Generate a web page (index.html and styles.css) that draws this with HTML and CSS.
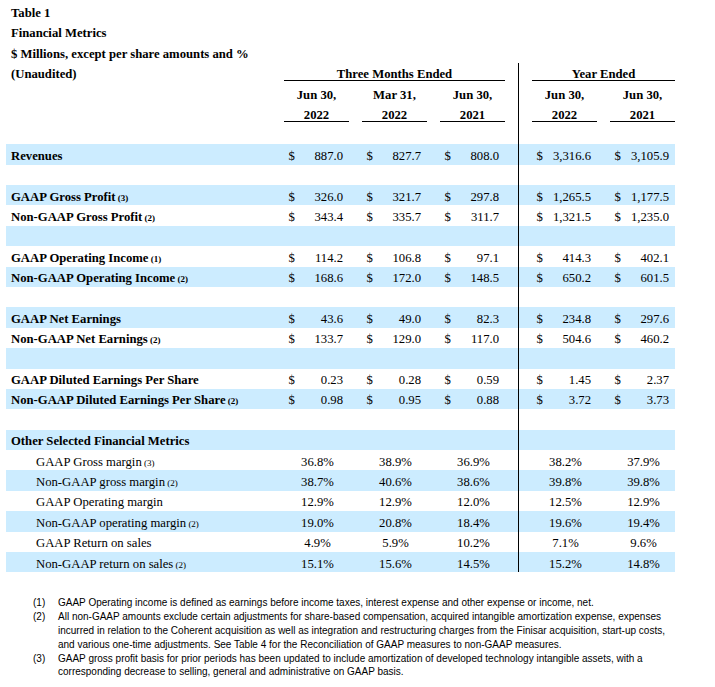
FILE: index.html
```html
<!DOCTYPE html>
<html>
<head>
<meta charset="utf-8">
<title>Table 1 Financial Metrics</title>
<link rel="stylesheet" href="styles.css">
</head>
<body>
<table class="fin">
<colgroup>
<col class="c-lbl"><col class="c-num"><col class="c-gap"><col class="c-num"><col class="c-gap"><col class="c-num"><col class="c-gap"><col class="c-div"><col class="c-num"><col class="c-gap"><col class="c-num">
</colgroup>
<tbody>
<tr><td class="lbl b" colspan="11">Table 1</td></tr>
<tr><td class="lbl b" colspan="11">Financial Metrics</td></tr>
<tr><td class="lbl b" colspan="11">$ Millions, except per share amounts and %</td></tr>
<tr><td class="lbl b">(Unaudited)</td><td class="ctr b ul" colspan="5">Three Months Ended</td><td></td><td class="vl"></td><td class="ctr b ul" colspan="3">Year Ended</td></tr>
<tr><td></td><td class="ctr b">Jun 30,</td><td></td><td class="ctr b">Mar 31,</td><td></td><td class="ctr b">Jun 30,</td><td></td><td class="vl"></td><td class="ctr b">Jun 30,</td><td></td><td class="ctr b">Jun 30,</td></tr>
<tr><td></td><td class="ctr b ul">2022</td><td></td><td class="ctr b ul">2022</td><td></td><td class="ctr b ul">2021</td><td></td><td class="vl"></td><td class="ctr b ul">2022</td><td></td><td class="ctr b ul">2021</td></tr>
<tr><td colspan="7"></td><td class="vl"></td><td colspan="3"></td></tr>

<tr class="blue"><td class="lbl b">Revenues</td><td><div class="m"><span>$</span><span>887.0</span></div></td><td></td><td><div class="m"><span>$</span><span>827.7</span></div></td><td></td><td><div class="m"><span>$</span><span>808.0</span></div></td><td></td><td class="vl"></td><td><div class="m"><span>$</span><span>3,316.6</span></div></td><td></td><td><div class="m"><span>$</span><span>3,105.9</span></div></td></tr>
<tr><td colspan="7"></td><td class="vl"></td><td colspan="3"></td></tr>
<tr class="blue"><td class="lbl b">GAAP Gross Profit<small> (3)</small></td><td><div class="m"><span>$</span><span>326.0</span></div></td><td></td><td><div class="m"><span>$</span><span>321.7</span></div></td><td></td><td><div class="m"><span>$</span><span>297.8</span></div></td><td></td><td class="vl"></td><td><div class="m"><span>$</span><span>1,265.5</span></div></td><td></td><td><div class="m"><span>$</span><span>1,177.5</span></div></td></tr>
<tr><td class="lbl b">Non-GAAP Gross Profit<small> (2)</small></td><td><div class="m"><span>$</span><span>343.4</span></div></td><td></td><td><div class="m"><span>$</span><span>335.7</span></div></td><td></td><td><div class="m"><span>$</span><span>311.7</span></div></td><td></td><td class="vl"></td><td><div class="m"><span>$</span><span>1,321.5</span></div></td><td></td><td><div class="m"><span>$</span><span>1,235.0</span></div></td></tr>
<tr class="blue"><td colspan="7"></td><td class="vl"></td><td colspan="3"></td></tr>
<tr><td class="lbl b">GAAP Operating Income<small> (1)</small></td><td><div class="m"><span>$</span><span>114.2</span></div></td><td></td><td><div class="m"><span>$</span><span>106.8</span></div></td><td></td><td><div class="m"><span>$</span><span>97.1</span></div></td><td></td><td class="vl"></td><td><div class="m"><span>$</span><span>414.3</span></div></td><td></td><td><div class="m"><span>$</span><span>402.1</span></div></td></tr>
<tr class="blue"><td class="lbl b">Non-GAAP Operating Income<small> (2)</small></td><td><div class="m"><span>$</span><span>168.6</span></div></td><td></td><td><div class="m"><span>$</span><span>172.0</span></div></td><td></td><td><div class="m"><span>$</span><span>148.5</span></div></td><td></td><td class="vl"></td><td><div class="m"><span>$</span><span>650.2</span></div></td><td></td><td><div class="m"><span>$</span><span>601.5</span></div></td></tr>
<tr><td colspan="7"></td><td class="vl"></td><td colspan="3"></td></tr>
<tr class="blue"><td class="lbl b">GAAP Net Earnings</td><td><div class="m"><span>$</span><span>43.6</span></div></td><td></td><td><div class="m"><span>$</span><span>49.0</span></div></td><td></td><td><div class="m"><span>$</span><span>82.3</span></div></td><td></td><td class="vl"></td><td><div class="m"><span>$</span><span>234.8</span></div></td><td></td><td><div class="m"><span>$</span><span>297.6</span></div></td></tr>
<tr><td class="lbl b">Non-GAAP Net Earnings<small> (2)</small></td><td><div class="m"><span>$</span><span>133.7</span></div></td><td></td><td><div class="m"><span>$</span><span>129.0</span></div></td><td></td><td><div class="m"><span>$</span><span>117.0</span></div></td><td></td><td class="vl"></td><td><div class="m"><span>$</span><span>504.6</span></div></td><td></td><td><div class="m"><span>$</span><span>460.2</span></div></td></tr>
<tr class="blue"><td colspan="7"></td><td class="vl"></td><td colspan="3"></td></tr>
<tr><td class="lbl b">GAAP Diluted Earnings Per Share</td><td><div class="m"><span>$</span><span>0.23</span></div></td><td></td><td><div class="m"><span>$</span><span>0.28</span></div></td><td></td><td><div class="m"><span>$</span><span>0.59</span></div></td><td></td><td class="vl"></td><td><div class="m"><span>$</span><span>1.45</span></div></td><td></td><td><div class="m"><span>$</span><span>2.37</span></div></td></tr>
<tr class="blue"><td class="lbl b">Non-GAAP Diluted Earnings Per Share<small> (2)</small></td><td><div class="m"><span>$</span><span>0.98</span></div></td><td></td><td><div class="m"><span>$</span><span>0.95</span></div></td><td></td><td><div class="m"><span>$</span><span>0.88</span></div></td><td></td><td class="vl"></td><td><div class="m"><span>$</span><span>3.72</span></div></td><td></td><td><div class="m"><span>$</span><span>3.73</span></div></td></tr>
<tr><td colspan="7"></td><td class="vl"></td><td colspan="3"></td></tr>

<tr class="blue"><td class="lbl b">Other Selected Financial Metrics</td><td colspan="6"></td><td class="vl"></td><td colspan="3"></td></tr>
<tr><td class="lbl ind">GAAP Gross margin<small> (3)</small></td><td class="pct">36.8%</td><td></td><td class="pct">38.9%</td><td></td><td class="pct">36.9%</td><td></td><td class="vl"></td><td class="pct">38.2%</td><td></td><td class="pct">37.9%</td></tr>
<tr class="blue"><td class="lbl ind">Non-GAAP gross margin<small> (2)</small></td><td class="pct">38.7%</td><td></td><td class="pct">40.6%</td><td></td><td class="pct">38.6%</td><td></td><td class="vl"></td><td class="pct">39.8%</td><td></td><td class="pct">39.8%</td></tr>
<tr><td class="lbl ind">GAAP Operating margin</td><td class="pct">12.9%</td><td></td><td class="pct">12.9%</td><td></td><td class="pct">12.0%</td><td></td><td class="vl"></td><td class="pct">12.5%</td><td></td><td class="pct">12.9%</td></tr>
<tr class="blue"><td class="lbl ind">Non-GAAP operating margin<small> (2)</small></td><td class="pct">19.0%</td><td></td><td class="pct">20.8%</td><td></td><td class="pct">18.4%</td><td></td><td class="vl"></td><td class="pct">19.6%</td><td></td><td class="pct">19.4%</td></tr>
<tr><td class="lbl ind">GAAP Return on sales</td><td class="pct">4.9%</td><td></td><td class="pct">5.9%</td><td></td><td class="pct">10.2%</td><td></td><td class="vl"></td><td class="pct">7.1%</td><td></td><td class="pct">9.6%</td></tr>
<tr class="blue"><td class="lbl ind">Non-GAAP return on sales<small> (2)</small></td><td class="pct">15.1%</td><td></td><td class="pct">15.6%</td><td></td><td class="pct">14.5%</td><td></td><td class="vl"></td><td class="pct">15.2%</td><td></td><td class="pct">14.8%</td></tr>
</tbody>
</table>

<div class="notes">
  <div class="note"><span class="nn">(1)</span><span class="nt">GAAP Operating income is defined as earnings before income taxes, interest expense and other expense or income, net.</span></div>
  <div class="note"><span class="nn">(2)</span><span class="nt">All non-GAAP amounts exclude certain adjustments for share-based compensation, acquired intangible amortization expense, expenses<br>incurred in relation to the Coherent acquisition as well as integration and restructuring charges from the Finisar acquisition, start-up costs,<br>and various one-time adjustments. See Table 4 for the Reconciliation of GAAP measures to non-GAAP measures.</span></div>
  <div class="note"><span class="nn">(3)</span><span class="nt">GAAP gross profit basis for prior periods has been updated to include amortization of developed technology intangible assets, with a<br>corresponding decrease to selling, general and administrative on GAAP basis.</span></div>
</div>
</body>
</html>
```

FILE: styles.css
```css
html, body {
  margin: 0;
  padding: 0;
  background: #ffffff;
}

body {
  width: 715px;
  color: #000;
  font-family: "Liberation Serif", "Times New Roman", serif;
}

.fin {
  margin: 1.5px 0 0 6px;
  width: 669px;
  table-layout: fixed;
  border-collapse: separate;
  border-spacing: 0;
  font-size: 12.7px;
}

.c-lbl { width: 278px; }
.c-num { width: 65px; }
.c-gap { width: 13px; }
.c-div { width: 14px; }

.fin tr {
  height: 20.4px;
}

.fin td {
  padding: 3.5px 0 0 0;
  line-height: 16px;
  white-space: nowrap;
  vertical-align: top;
}

.fin tr.blue {
  background-color: #ccecff;
}

.lbl {
  padding-left: 5px !important;
}

.lbl.ind {
  padding-left: 30px !important;
}

.b {
  font-weight: bold;
}

.fin small {
  font-size: 9px;
  line-height: 0;
}

.ctr {
  text-align: center;
}

.ul {
  background-image: linear-gradient(#000, #000);
  background-repeat: no-repeat;
  background-size: 100% 1px;
  background-position: 0 calc(100% - 2px);
}

.vl {
  background-image: linear-gradient(#000, #000);
  background-repeat: no-repeat;
  background-size: 1px 100%;
  background-position: 0 0;
}

.m {
  display: flex;
  justify-content: space-between;
  padding: 0 6px 0 4.5px;
}

.pct {
  text-align: center;
  padding-left: 2px !important;
}

.notes {
  margin: 24px 0 0 33px;
  font-family: "Liberation Sans", Arial, sans-serif;
  font-size: 10px;
  line-height: 13.8px;
  color: #000;
}

.note {
  display: grid;
  grid-template-columns: 25px 1fr;
}

.nt {
  white-space: nowrap;
}
```
